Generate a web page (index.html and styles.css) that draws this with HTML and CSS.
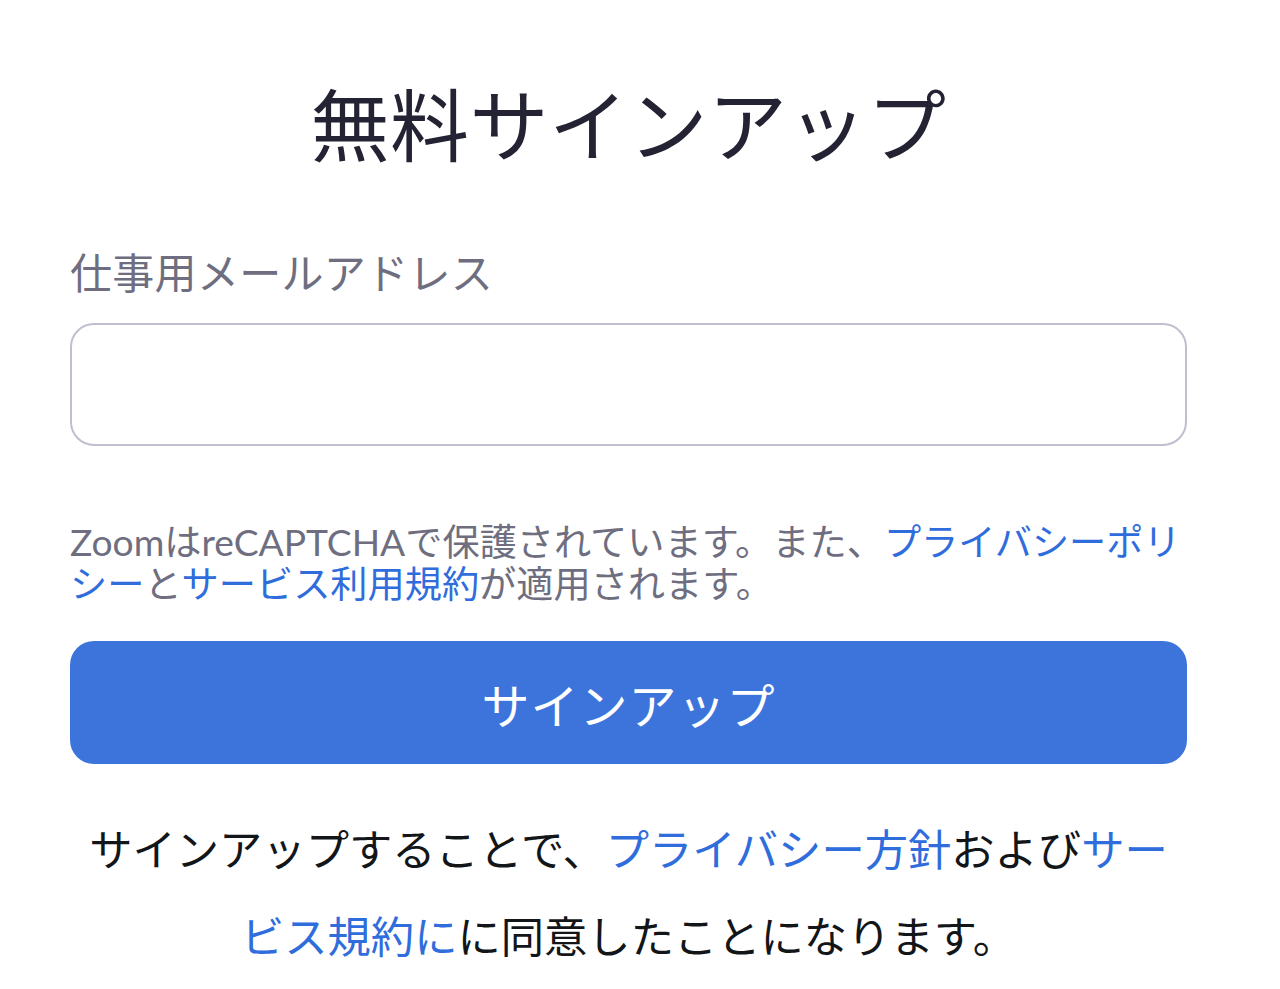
FILE: index.html
```html
<!DOCTYPE html>
<html lang="ja">
<head>
    <meta charset="UTF-8">
    <meta name="viewport" content="width=device-width, initial-scale=1.0">
    <title>無料サインアップ</title>
    <link rel="stylesheet" href="styles.css">
</head>
<body>

    <div class="signup">
        <h1 class="signup-title">無料サインアップ</h1>

        <form class="signup-form" onsubmit="return false">
            <label for="email" class="field-label">仕事用メールアドレス</label>
            <input type="email" id="email" name="email" class="field-input">

            <p class="captcha-note">Zoomは<span class="latin">reCAPTCHA</span>で保護されています。また、<a href="#">プライバシーポリシー</a>と<a href="#">サービス利用規約</a>が適用されます。</p>

            <button type="submit" class="signup-btn">サインアップ</button>
        </form>

        <p class="agree-note">サインアップすることで、<a href="#">プライバシー方針</a>および<a href="#">サービス規約に</a>に同意したことになります。</p>
    </div>

</body>
</html>
```

FILE: styles.css
```css
* {
    margin: 0;
    padding: 0;
    box-sizing: border-box;
}

body {
    font-family: Lato, "Noto Sans CJK JP", sans-serif;
    background-color: #fff;
    color: #232333;
}

.signup {
    width: 1117px;
    margin-left: 70px;
    padding-top: 78px;
}

.signup-title {
    font-size: 79px;
    font-weight: 400;
    text-align: center;
    line-height: 96px;
    color: #232333;
    letter-spacing: 0.5px;
}

.signup-form {
    display: flex;
    flex-direction: column;
    margin-top: 73px;
}

.field-label {
    font-size: 42px;
    line-height: 52px;
    color: #6e6e80;
    letter-spacing: 0.3px;
}

.field-input {
    margin-top: 24px;
    height: 123px;
    border: 2px solid #bfbfcf;
    border-radius: 24px;
    font-size: 40px;
    padding: 0 28px;
    outline: none;
}

.captcha-note {
    margin-top: 75px;
    font-size: 37.2px;
    line-height: 42px;
    color: #6e6e80;
}

.captcha-note a,
.agree-note a {
    color: #2f6ddc;
    text-decoration: none;
}

.signup-btn {
    margin-top: 36px;
    height: 123px;
    background-color: #3d74db;
    color: #fff;
    border: none;
    border-radius: 24px;
    font-family: "Noto Sans CJK JP", sans-serif;
    font-size: 48px;
    letter-spacing: 1px;
    cursor: pointer;
}

.agree-note {
    margin-top: 42px;
    font-size: 43.3px;
    line-height: 87px;
    text-align: center;
    color: #131619;
    padding: 0 10px;
}
```
